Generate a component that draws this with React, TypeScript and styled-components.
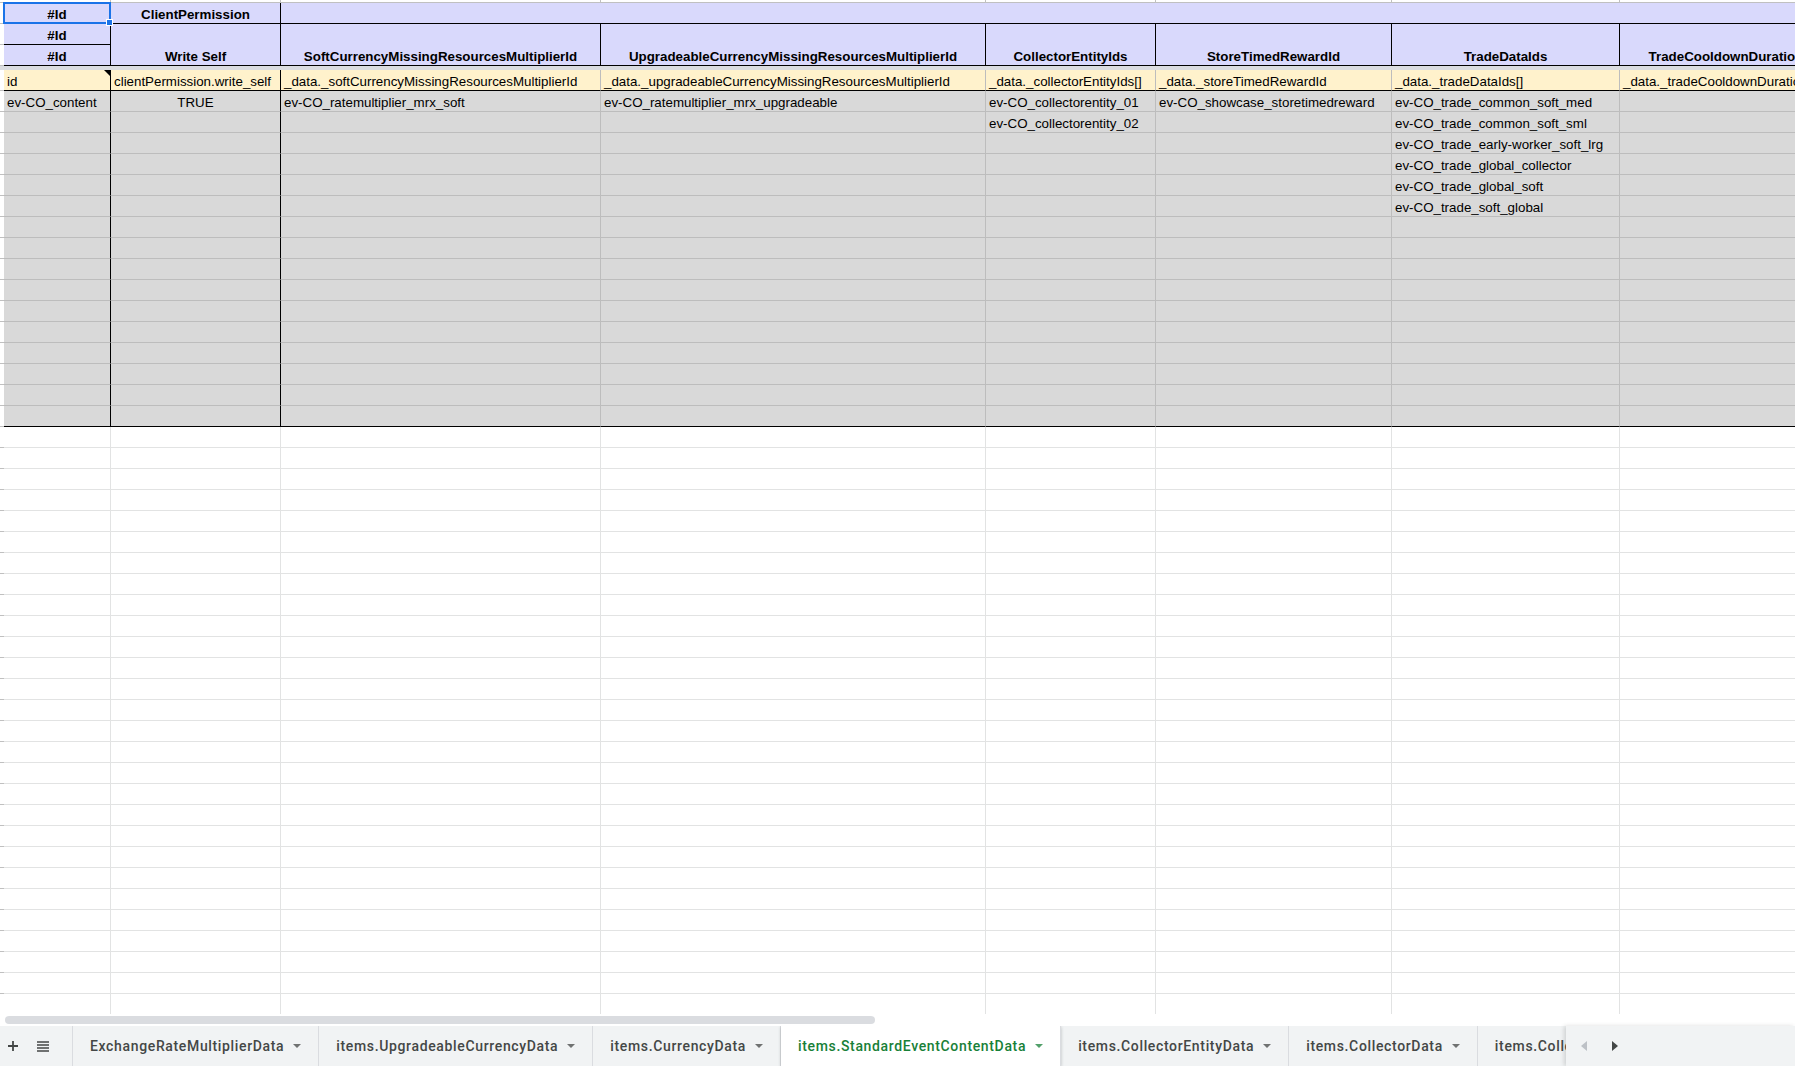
import styled, { createGlobalStyle } from 'styled-components'

const GlobalStyle = createGlobalStyle`
  html, body {
    margin: 0;
    padding: 0;
    height: 100%;
    overflow: hidden;
    background: #fff;
  }
  #root {
    height: 100%;
  }
  * {
    box-sizing: border-box;
  }
`

// gutter + columns A..H + one more off screen
const COL_WIDTHS = [4, 107, 170, 320, 385, 170, 236, 228, 213, 200]
const DATA_COLS = COL_WIDTHS.length - 1

const BLACK = '#000'
const GRID_GRAY = '#bdbdbd'
const GRID_LIGHT = '#e2e3e3'
const GUTTER_LINE = '#c0c0c0'

const HEADER_BG = '#d9d9fc'
const FIELD_BG = '#fff2cc'
const DATA_BG = '#d9d9d9'

const Page = styled.div`
    display: flex;
    flex-direction: column;
    width: 100vw;
    height: 100vh;
    font-family: "Liberation Sans", Arial, sans-serif;
`

const Viewport = styled.div`
    flex: 1;
    min-height: 0;
    overflow: hidden;
`

const Grid = styled.div`
    display: grid;
    grid-template-columns: ${COL_WIDTHS.map(w => `${w}px`).join(' ')};
    grid-template-rows: 3px 21px 21px 21px 4px;
    grid-auto-rows: 21px;
    width: max-content;
`

interface CellProps {
    $bg: string;
    $right: string;
    $bottom: string;
    $center?: boolean;
    $bold?: boolean;
    $span?: number;
    $rows?: number;
}

const Cell = styled.div<CellProps>`
    grid-column: span ${p => p.$span ?? 1};
    grid-row: span ${p => p.$rows ?? 1};
    display: flex;
    align-items: flex-end;
    justify-content: ${p => (p.$center ? 'center' : 'flex-start')};
    padding: 0 3px 1px;
    background: ${p => p.$bg};
    border-right: 1px solid ${p => p.$right};
    border-bottom: 1px solid ${p => p.$bottom};
    font-size: 13.333px;
    line-height: 15px;
    font-weight: ${p => (p.$bold ? 700 : 400)};
    color: #000;
    white-space: nowrap;
    overflow: hidden;
    position: relative;
`

const SelectedCell = styled(Cell)`
    overflow: visible;
    z-index: 2;
`

const Selection = styled.div`
    position: absolute;
    inset: -1px -1px -1px -1px;
    border: 2px solid #1a73e8;
    pointer-events: none;
`

const FillHandle = styled.div`
    position: absolute;
    right: -4px;
    bottom: -4px;
    width: 7px;
    height: 7px;
    background: #1a73e8;
    border: 1px solid #fff;
`

const NoteMark = styled.span`
    position: absolute;
    top: 0;
    right: 0;
    width: 0;
    height: 0;
    border-top: 6px solid #000;
    border-left: 6px solid transparent;
`

const FrozenBar = styled.div`
    grid-column: 1 / -1;
    background: #dadce0;
`

const ScrollTrack = styled.div`
    flex: none;
    height: 12px;
    padding: 2px 0 2px 5px;
    background: #fff;
`

const ScrollThumb = styled.div`
    width: 870px;
    height: 8px;
    border-radius: 4px;
    background: #dadce0;
`

const TabBar = styled.div`
    flex: none;
    height: 40px;
    display: flex;
    align-items: stretch;
    background: #f1f3f4;
    font-family: Roboto, "Noto Sans", sans-serif;
    font-size: 14px;
    font-weight: 500;
    letter-spacing: 0.65px;
    color: #444746;
`

const Controls = styled.div`
    flex: none;
    width: 73px;
    display: flex;
    align-items: center;
    gap: 14px;
    padding-left: 5px;
    border-right: 1px solid #dadce0;
`

const IconButton = styled.div`
    width: 16px;
    height: 16px;
    display: flex;
    align-items: center;
    justify-content: center;
    color: #444746;
`

const Tabs = styled.div`
    flex: 1;
    min-width: 0;
    display: flex;
    overflow: hidden;
`

const Tab = styled.div<{ $active?: boolean }>`
    flex: none;
    display: flex;
    align-items: center;
    gap: 9px;
    padding: 0 17px;
    white-space: nowrap;
    border-right: 1px solid #dadce0;
    color: ${p => (p.$active ? '#188038' : '#444746')};
    background: ${p => (p.$active ? '#fff' : 'transparent')};
    box-shadow: ${p => (p.$active ? '0 1px 3px rgba(60, 64, 67, 0.3)' : 'none')};
`

const Nav = styled.div`
    flex: none;
    width: 229px;
    display: flex;
    align-items: center;
    gap: 25px;
    padding-left: 15px;
    background: #f1f3f4;
    box-shadow: -2px 0 4px rgba(60, 64, 67, 0.18);
    z-index: 1;
`

const headerTitles = [
    'SoftCurrencyMissingResourcesMultiplierId',
    'UpgradeableCurrencyMissingResourcesMultiplierId',
    'CollectorEntityIds',
    'StoreTimedRewardId',
    'TradeDataIds',
    'TradeCooldownDuration',
    '',
]

const fieldRow = [
    'id',
    'clientPermission.write_self',
    '_data._softCurrencyMissingResourcesMultiplierId',
    '_data._upgradeableCurrencyMissingResourcesMultiplierId',
    '_data._collectorEntityIds[]',
    '_data._storeTimedRewardId',
    '_data._tradeDataIds[]',
    '_data._tradeCooldownDuration',
    '',
]

const tradeIds = [
    'ev-CO_trade_common_soft_med',
    'ev-CO_trade_common_soft_sml',
    'ev-CO_trade_early-worker_soft_lrg',
    'ev-CO_trade_global_collector',
    'ev-CO_trade_global_soft',
    'ev-CO_trade_soft_global',
]

const dataRows: string[][] = Array.from({ length: 16 }, (_, i) => {
    const row = Array(DATA_COLS).fill('')
    if (i === 0) {
        row[0] = 'ev-CO_content'
        row[1] = 'TRUE'
        row[2] = 'ev-CO_ratemultiplier_mrx_soft'
        row[3] = 'ev-CO_ratemultiplier_mrx_upgradeable'
        row[5] = 'ev-CO_showcase_storetimedreward'
    }
    if (i < 2) row[4] = `ev-CO_collectorentity_0${i + 1}`
    if (i < tradeIds.length) row[6] = tradeIds[i]
    return row
})

const BLANK_ROWS = 30

const sheetTabs = [
    'ExchangeRateMultiplierData',
    'items.UpgradeableCurrencyData',
    'items.CurrencyData',
    'items.StandardEventContentData',
    'items.CollectorEntityData',
    'items.CollectorData',
    'items.CollectorLevelData',
]

function Caret() {
    return (
        <svg width="8" height="4" viewBox="0 0 8 4">
            <path d="M0 0h8L4 4z" fill="currentColor" opacity="0.75" />
        </svg>
    )
}

function Gutter({ bottom = GUTTER_LINE }: { bottom?: string }) {
    return <Cell $bg="#fff" $right={GUTTER_LINE} $bottom={bottom} />
}

function App() {
    const dividerRight = (col: number) => (col < 2 ? BLACK : undefined)

    return (
        <Page>
            <GlobalStyle />
            <Viewport>
                <Grid>
                    {/* hidden column header strip */}
                    {COL_WIDTHS.map((_, i) => (
                        <Cell key={`top-${i}`} $bg="#fff" $right={GUTTER_LINE} $bottom={GUTTER_LINE} />
                    ))}

                    {/* row 1 */}
                    <Gutter />
                    <SelectedCell $bg={HEADER_BG} $right={BLACK} $bottom={BLACK} $center $bold>
                        #Id
                        <Selection>
                            <FillHandle />
                        </Selection>
                    </SelectedCell>
                    <Cell $bg={HEADER_BG} $right={BLACK} $bottom={BLACK} $center $bold>
                        ClientPermission
                    </Cell>
                    <Cell $bg={HEADER_BG} $right={HEADER_BG} $bottom={BLACK} $span={DATA_COLS - 2} />

                    {/* rows 2-3 */}
                    <Gutter />
                    <Cell $bg={HEADER_BG} $right={BLACK} $bottom={BLACK} $center $bold>
                        #Id
                    </Cell>
                    <Cell $bg={HEADER_BG} $right={BLACK} $bottom={BLACK} $center $bold $rows={2}>
                        Write Self
                    </Cell>
                    {headerTitles.map((title, i) => (
                        <Cell key={`h-${i}`} $bg={HEADER_BG} $right={BLACK} $bottom={BLACK} $center $bold $rows={2}>
                            {title}
                        </Cell>
                    ))}
                    <Gutter />
                    <Cell $bg={HEADER_BG} $right={BLACK} $bottom={BLACK} $center $bold>
                        #Id
                    </Cell>

                    <FrozenBar />

                    {/* field path row */}
                    <Gutter />
                    {fieldRow.map((text, col) => (
                        <Cell
                            key={`f-${col}`}
                            $bg={FIELD_BG}
                            $right={dividerRight(col) ?? GRID_GRAY}
                            $bottom={BLACK}
                        >
                            {text}
                            {col === 0 && <NoteMark />}
                        </Cell>
                    ))}

                    {/* data rows */}
                    {dataRows.map((row, r) => {
                        const bottom = r === dataRows.length - 1 ? BLACK : GRID_GRAY
                        return [
                            <Gutter key={`dg-${r}`} />,
                            ...row.map((text, col) => (
                                <Cell
                                    key={`d-${r}-${col}`}
                                    $bg={DATA_BG}
                                    $right={dividerRight(col) ?? GRID_GRAY}
                                    $bottom={bottom}
                                    $center={col === 1}
                                >
                                    {text}
                                </Cell>
                            )),
                        ]
                    })}

                    {/* empty rows */}
                    {Array.from({ length: BLANK_ROWS }).map((_, r) => [
                        <Gutter key={`bg-${r}`} />,
                        ...Array.from({ length: DATA_COLS }).map((__, col) => (
                            <Cell key={`b-${r}-${col}`} $bg="#fff" $right={GRID_LIGHT} $bottom={GRID_LIGHT} />
                        )),
                    ])}
                </Grid>
            </Viewport>

            <ScrollTrack>
                <ScrollThumb />
            </ScrollTrack>

            <TabBar>
                <Controls>
                    <IconButton>
                        <svg width="12" height="12" viewBox="0 0 12 12">
                            <path d="M6 1v10M1 6h10" stroke="currentColor" strokeWidth="1.8" />
                        </svg>
                    </IconButton>
                    <IconButton>
                        <svg width="12" height="11" viewBox="0 0 12 11">
                            <path d="M0 1h12M0 4h12M0 7h12M0 10h12" stroke="currentColor" strokeWidth="1.4" />
                        </svg>
                    </IconButton>
                </Controls>
                <Tabs>
                    {sheetTabs.map(name => (
                        <Tab key={name} $active={name === 'items.StandardEventContentData'}>
                            {name}
                            <Caret />
                        </Tab>
                    ))}
                </Tabs>
                <Nav>
                    <svg width="6" height="10" viewBox="0 0 6 10">
                        <path d="M6 0v10L0 5z" fill="#bdc1c6" />
                    </svg>
                    <svg width="6" height="10" viewBox="0 0 6 10">
                        <path d="M0 0v10l6-5z" fill="#444746" />
                    </svg>
                </Nav>
            </TabBar>
        </Page>
    )
}

export default App
